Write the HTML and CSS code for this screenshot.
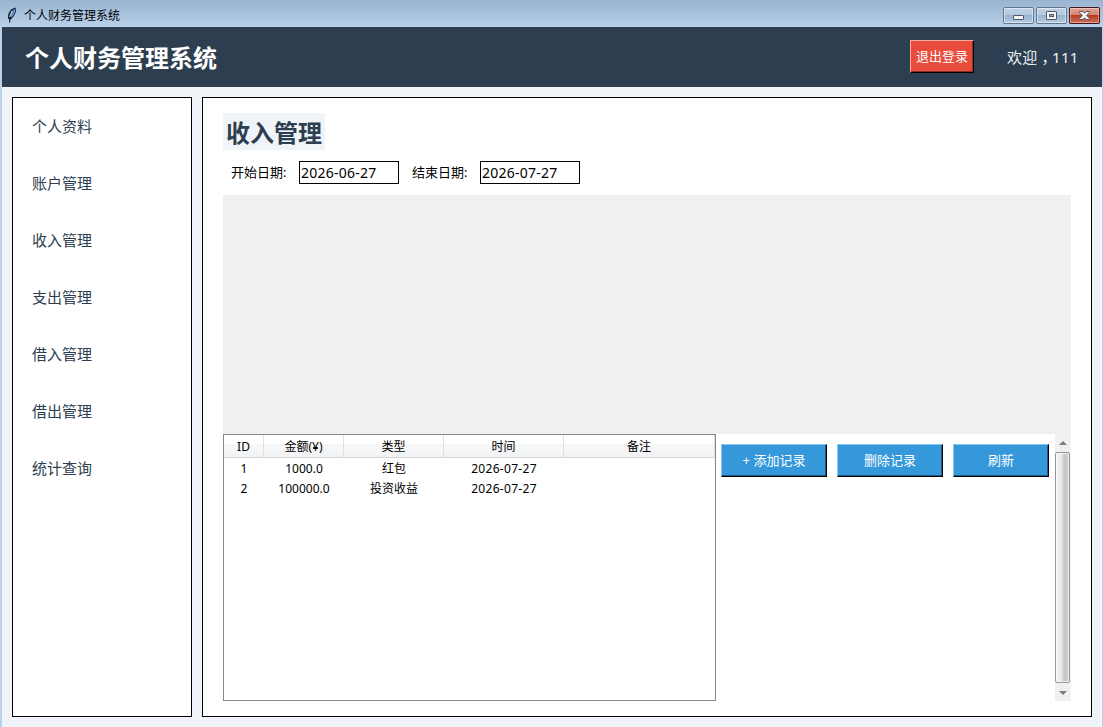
FILE: index.html
```html
<!DOCTYPE html>
<html lang="zh-CN">
<head>
    <meta charset="UTF-8">
    <meta name="viewport" content="width=device-width, initial-scale=1.0">
    <title>个人财务管理系统</title>
    <link rel="stylesheet" href="styles.css">
</head>
<body>
    <div class="window">
        <div class="titlebar">
            <svg class="feather" width="10" height="16" viewBox="0 0 10 16">
                <path d="M1.2 12 C0 8 2.5 2 8.5 0.5 C9.8 4 8 9.5 3.5 12.5 Z" fill="#1c2733"/>
                <path d="M4.2 10.5 C3.4 7 5 3.2 7.9 1.8 C8.6 5 7.4 8.5 4.2 10.5 Z" fill="#5d8fd0"/>
                <path d="M3.2 11 L2.5 15.5" fill="none" stroke="#0a0f16" stroke-width="1"/>
                <path d="M2.6 10 L5.2 4" stroke="#e4eefb" stroke-width="1"/>
            </svg>
            <span class="titlebar-text">个人财务管理系统</span>
            <div class="win-controls">
                <div class="win-btn">
                    <svg width="31" height="17" viewBox="0 0 31 17">
                        <rect x="10.5" y="8.5" width="10" height="4" rx="0.5" fill="#f4f4f4" stroke="#535a68"/>
                    </svg>
                </div>
                <div class="win-btn">
                    <svg width="31" height="17" viewBox="0 0 31 17">
                        <rect x="10.5" y="4.5" width="10" height="8" rx="0.5" fill="#f4f4f4" stroke="#535a68"/>
                        <rect x="13.5" y="7.5" width="4" height="2" fill="#8fa9c6" stroke="#535a68"/>
                    </svg>
                </div>
                <div class="win-btn close">
                    <svg width="31" height="17" viewBox="0 0 31 17">
                        <path d="M10.5 4.5 h3.5 l1.5 1.7 l1.5 -1.7 h3.5 v1 l-2.8 3 l2.8 3 v1 h-3.5 l-1.5 -1.7 l-1.5 1.7 h-3.5 v-1 l2.8 -3 l-2.8 -3 Z" fill="#f4f4f4" stroke="#535a68"/>
                    </svg>
                </div>
            </div>
        </div>

        <div class="header">
            <div class="brand">个人财务管理系统</div>
            <button class="btn logout">退出登录</button>
            <div class="welcome">欢迎<span class="comma">，</span>111</div>
        </div>

        <div class="content">
            <div class="sidebar">
                <div class="nav-item">个人资料</div>
                <div class="nav-item">账户管理</div>
                <div class="nav-item">收入管理</div>
                <div class="nav-item">支出管理</div>
                <div class="nav-item">借入管理</div>
                <div class="nav-item">借出管理</div>
                <div class="nav-item">统计查询</div>
            </div>

            <div class="main">
                <h1 class="page-title">收入管理</h1>
                <div class="filters">
                    <label class="start-label" for="startDate">开始日期:</label>
                    <input type="text" id="startDate" value="2026-06-27">
                    <label class="end-label" for="endDate">结束日期:</label>
                    <input type="text" id="endDate" value="2026-07-27">
                </div>
                <div class="blank"></div>
                <div class="records">
                    <div class="table-box">
                        <table>
                            <colgroup>
                                <col class="col-id">
                                <col class="col-amount">
                                <col class="col-type">
                                <col class="col-time">
                                <col class="col-note">
                            </colgroup>
                            <thead>
                                <tr><th>ID</th><th>金额(¥)</th><th>类型</th><th>时间</th><th>备注</th></tr>
                            </thead>
                            <tbody>
                                <tr><td>1</td><td>1000.0</td><td>红包</td><td class="date">2026-07-27</td><td></td></tr>
                                <tr><td>2</td><td>100000.0</td><td>投资收益</td><td class="date">2026-07-27</td><td></td></tr>
                            </tbody>
                        </table>
                    </div>
                    <div class="actions">
                        <button class="btn">+ 添加记录</button>
                        <button class="btn">删除记录</button>
                        <button class="btn narrow">刷新</button>
                    </div>
                    <div class="scrollbar">
                        <svg class="arrow" width="16" height="18" viewBox="0 0 16 18">
                            <path d="M4 11 L8 7 L12 11 Z" fill="#7c7c7c"/>
                        </svg>
                        <div class="thumb"></div>
                        <svg class="arrow" width="16" height="18" viewBox="0 0 16 18">
                            <path d="M4 8 L12 8 L8 12 Z" fill="#7c7c7c"/>
                        </svg>
                    </div>
                </div>
            </div>
        </div>
    </div>
</body>
</html>
```
FILE: styles.css
```css
* {
    box-sizing: border-box;
}
body {
    margin: 0;
    font-family: "Noto Sans", "Noto Sans CJK SC", sans-serif;
    font-size: 12px;
    color: #000;
}
.window {
    width: 1103px;
    height: 727px;
    display: flex;
    flex-direction: column;
    overflow: hidden;
    background: #b9d1ea;
    padding: 0 1px 0 2px;
}

/* title bar */
.titlebar {
    height: 27px;
    margin: 0 -1px 0 -2px;
    padding: 0 3px 0 7px;
    display: flex;
    align-items: center;
    flex-shrink: 0;
    background: linear-gradient(#99b4d1, #b9d1ea);
}
.titlebar-text {
    margin-left: 7px;
    padding-top: 5px;
    line-height: 22px;
}
.feather {
    margin-top: 3px;
}
.win-controls {
    margin-left: auto;
    margin-top: 4px;
    display: flex;
    gap: 2px;
}
.win-btn {
    width: 31px;
    height: 17px;
    border-radius: 2px;
    background: linear-gradient(#c0d2e6 0%, #b4c9e0 45%, #98b3d0 50%, #b6cee8 100%);
    box-shadow: inset 0 0 0 1px #64758d, inset 0 0 0 2px rgba(255, 255, 255, 0.5);
}
.win-btn svg {
    display: block;
}
.win-btn.close {
    background: linear-gradient(#e6a598 0%, #d68472 45%, #b83b22 50%, #d5745c 100%);
    box-shadow: inset 0 0 0 1px #43141a, inset 0 0 0 2px rgba(255, 255, 255, 0.4);
}

/* header */
.header {
    height: 60px;
    padding: 0 23px;
    display: flex;
    align-items: center;
    flex-shrink: 0;
    background: #2c3e50;
    color: #ecf0f1;
}
.brand {
    padding-bottom: 2px;
    font-size: 24px;
    font-weight: bold;
    color: #fff;
}
.btn {
    width: 106px;
    height: 33px;
    padding: 0;
    border: 1px solid;
    border-color: #85c8f5 #000 #000 #85c8f5;
    box-shadow: inset -1px -1px 0 #1f5a84;
    background: #3498db;
    color: #fff;
    font-family: inherit;
    font-size: 13px;
    line-height: 29px;
}
.btn.narrow {
    width: 96px;
}
.btn.logout {
    width: 64px;
    margin-left: auto;
    margin-bottom: 1px;
    border-color: #ffaaa0 #000 #000 #ffaaa0;
    box-shadow: inset -1px -1px 0 #8b2e24;
    background: #e74c3c;
}
.welcome {
    width: 72px;
    margin-left: 33px;
    padding-bottom: 2px;
    font-size: 15px;
    letter-spacing: 0.2px;
    white-space: nowrap;
}
/* half-width comma, centered in its cell */
.comma {
    padding: 0 3px 0 4px;
    font-feature-settings: "halt";
}

/* content */
.content {
    flex: 1;
    display: flex;
    gap: 10px;
    padding: 10px;
    background: #f0f4f8;
}
.sidebar {
    width: 180px;
    border: 1px solid #000;
    background: #fff;
    padding: 0 19px;
}
.nav-item {
    height: 57px;
    line-height: 57px;
    font-size: 15px;
    color: #2c3e50;
}
.main {
    flex: 1;
    border: 1px solid #000;
    background: #fff;
    padding: 15px 20px;
}
.page-title {
    width: 102px;
    height: 37px;
    margin: 0;
    padding-left: 3px;
    background: #f0f4f8;
    color: #2c3e50;
    font-size: 24px;
    line-height: 40px;
    white-space: nowrap;
}
.filters {
    height: 45px;
    padding: 0 0 0 8px;
    display: flex;
    align-items: center;
    font-size: 13px;
}
.filters input {
    width: 100px;
    height: 23px;
    padding: 0 1px;
    border: 1px solid #000;
    background: #fff;
    color: #000;
    font-family: inherit;
    font-size: 14px;
    letter-spacing: 0.25px;
}
.filters label {
    line-height: 18px;
    padding-bottom: 1px;
}
.start-label {
    width: 68px;
}
.end-label {
    width: 68px;
    margin-left: 13px;
}
.blank {
    height: 239px;
    background: #f0f0f0;
}

/* records */
.records {
    height: 267px;
    display: flex;
}
.table-box {
    width: 493px;
    border: 1px solid #828790;
}
table {
    width: 491px;
    table-layout: fixed;
    border-collapse: separate;
    border-spacing: 0;
    text-align: center;
}
.col-id {
    width: 40px;
}
.col-amount {
    width: 80px;
}
.col-type {
    width: 100px;
}
.col-time {
    width: 120px;
}
th, td {
    padding: 2px 0 0;
    line-height: 18px;
}
th {
    height: 23px;
    font-weight: normal;
    border-right: 1px solid #dedfe1;
    border-bottom: 1px solid #d5d5d5;
    background: linear-gradient(#fff 0%, #fff 40%, #f7f8fa 41%, #f1f2f4 100%);
}
td {
    height: 20px;
}
td.date {
    letter-spacing: 0.3px;
}
.actions {
    display: flex;
    gap: 10px;
    padding: 10px 0 0 5px;
}
.scrollbar {
    width: 16px;
    margin-left: auto;
    display: flex;
    flex-direction: column;
    background: #f0f0f0;
}
.arrow {
    display: block;
    flex-shrink: 0;
}
.thumb {
    flex: 1;
    width: 15px;
    border: 1px solid #979797;
    border-radius: 2px;
    background: linear-gradient(to right, #f5f5f5 0%, #e6e6e8 45%, #c4c4c9 60%, #d2d2d6 100%);
    box-shadow: inset 0 0 0 1px rgba(255, 255, 255, 0.6);
}
```
